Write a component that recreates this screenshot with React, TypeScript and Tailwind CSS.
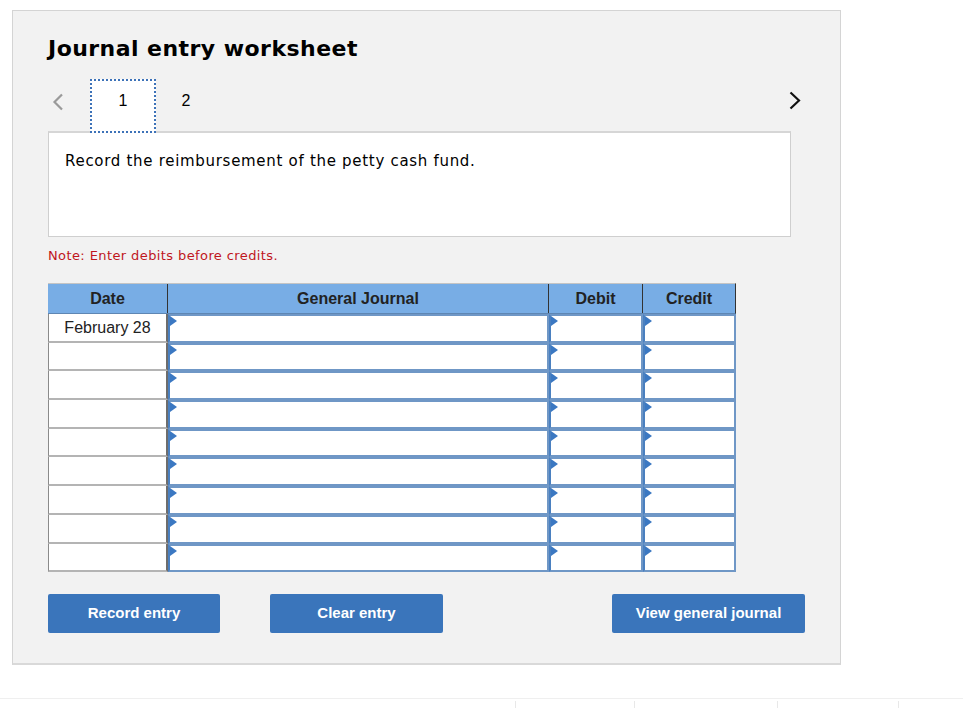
import React from 'react';

const ROWS = ['February 28', '', '', '', '', '', '', '', ''];

function InputCell({ width }: { width: string }) {
    return (
        <div className={`relative ${width} h-full bg-white border-2 border-[#6f97c6] border-l-[#4a80c0]`}>
            <span className="absolute left-0 top-0 w-0 h-0 border-y-[5px] border-y-transparent border-l-[7px] border-l-[#3b78c2]" />
        </div>
    );
}

function Button({ label, width }: { label: string; width: string }) {
    return (
        <button
            className={`${width} h-[39px] rounded-[2px] bg-[#3a75bb] text-white text-[15px] font-bold`}
            style={{ fontFamily: '"Liberation Sans", Arial, sans-serif' }}
        >
            {label}
        </button>
    );
}

export default function App() {
    const verdana = { fontFamily: '"DejaVu Sans", Verdana, sans-serif' };
    const arial = { fontFamily: '"Liberation Sans", Arial, sans-serif' };

    return (
        <div className="relative w-[963px] h-[708px] bg-white pt-[10px] pl-[12px] overflow-hidden">
            <div className="w-[829px] h-[655px] bg-[#f2f2f2] border border-[#d4d4d4] border-b-2 border-b-[#d9d9d9] pt-[24px] pl-[35px]">
                <h1 className="h-[28px] leading-[28px] text-[22px] font-bold tracking-[0.45px] text-black" style={verdana}>
                    Journal entry worksheet
                </h1>

                {/* tabs */}
                <div className="mt-[16px] h-[52px] w-[743px] flex items-start" style={arial}>
                    <div className="w-[42px] pt-[14px] pl-[4px]">
                        <svg width="12" height="18" viewBox="0 0 12 18">
                            <path d="M10 1.5 L2.5 9 L10 16.5" fill="none" stroke="#9a9a9a" strokeWidth="2.2" />
                        </svg>
                    </div>
                    <div className="w-[66px] h-[54px] bg-white border-2 border-dotted border-[#3d72b8] flex justify-center pt-[11px] text-[16px] leading-[18px] text-black relative z-10">
                        1
                    </div>
                    <div className="w-[60px] flex justify-center pt-[13px] text-[16px] leading-[18px] text-black">
                        2
                    </div>
                    <div className="flex-1" />
                    <div className="pt-[12px] -mr-[10px]">
                        <svg width="12" height="19" viewBox="0 0 12 19">
                            <path d="M1.5 1.5 L10 9.5 L1.5 17.5" fill="none" stroke="#111" strokeWidth="2.2" />
                        </svg>
                    </div>
                </div>

                {/* question */}
                <div className="w-[743px] h-[106px] bg-white border border-[#cfcfcf] border-t-2 border-t-[#d6d6d6] pl-[16px] pt-[19px]">
                    <p className="text-[15px] leading-[18px] tracking-[0.7px] text-black" style={verdana}>
                        Record the reimbursement of the petty cash fund.
                    </p>
                </div>

                <p className="mt-[11px] text-[13px] leading-[16px] tracking-[0.4px] text-[#c0171d]" style={verdana}>
                    Note: Enter debits before credits.
                </p>

                {/* table */}
                <div className="mt-[19px] w-[688px] text-[#222]" style={arial}>
                    <div className="flex h-[31px] bg-[#78ade5] border-t border-[#c4c4c4] border-b border-b-[#5e86b3] border-r border-r-[#333] text-[16px] font-bold">
                        <div className="w-[120px] flex items-center justify-center border-r border-[#333]">Date</div>
                        <div className="w-[381px] flex items-center justify-center border-r border-[#333]">General Journal</div>
                        <div className="w-[94px] flex items-center justify-center border-r border-[#333]">Debit</div>
                        <div className="flex-1 flex items-center justify-center">Credit</div>
                    </div>
                    {ROWS.map((d, i) => (
                        <div key={i} className="flex h-[28.7px]">
                            <div className="w-[120px] h-full bg-white border-l border-[#8a8a8a] border-b-2 border-b-[#b4b4b4] border-r-2 border-r-[#6d6d6d] flex items-center justify-center pt-[2px] text-[16px] text-[#222]">
                                {d}
                            </div>
                            <InputCell width="w-[381px]" />
                            <InputCell width="w-[94px]" />
                            <InputCell width="w-[93px]" />
                        </div>
                    ))}
                </div>

                {/* buttons */}
                <div className="mt-[22px] flex">
                    <Button label="Record entry" width="w-[172px]" />
                    <div className="w-[50px]" />
                    <Button label="Clear entry" width="w-[173px]" />
                    <div className="w-[169px]" />
                    <Button label="View general journal" width="w-[193px]" />
                </div>
            </div>

            {/* footer strip */}
            <div className="absolute left-0 right-0 top-[698px] h-px bg-[#efefef]" />
            <div className="absolute top-[701px] left-[515px] w-px h-[7px] bg-[#e8e8e8]" />
            <div className="absolute top-[701px] left-[634px] w-px h-[7px] bg-[#e8e8e8]" />
            <div className="absolute top-[701px] left-[777px] w-px h-[7px] bg-[#e8e8e8]" />
            <div className="absolute top-[701px] left-[898px] w-px h-[7px] bg-[#e8e8e8]" />
        </div>
    );
}
